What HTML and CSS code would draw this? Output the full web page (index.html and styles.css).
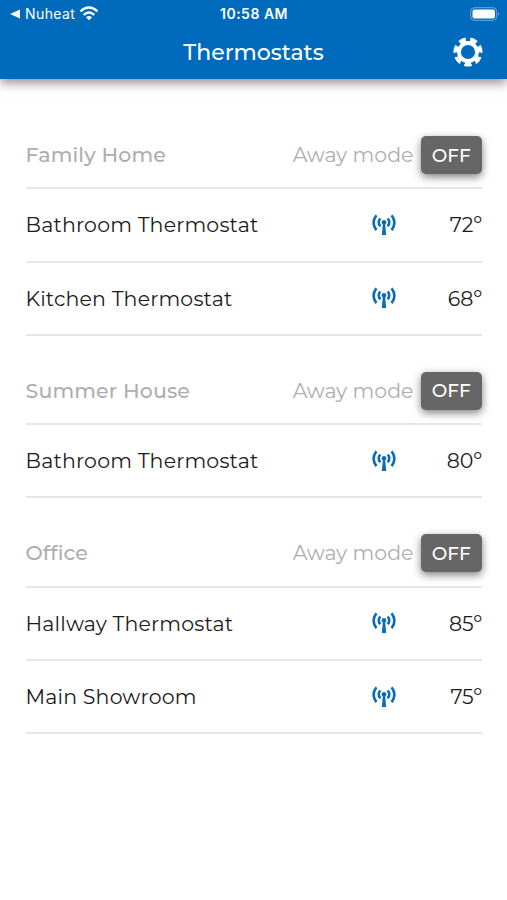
FILE: index.html
```html
<!DOCTYPE html>
<html lang="en">
<head>
    <meta charset="UTF-8">
    <meta name="viewport" content="width=device-width, initial-scale=1.0">
    <title>Thermostats</title>
    <link rel="stylesheet" href="styles.css">
</head>
<body>
    <svg width="0" height="0" class="sprite">
        <symbol id="signal" viewBox="0 0 26 22">
            <g fill="none" stroke="currentColor" stroke-width="2.6">
                <path d="M5.400 1.300Q-.2 8.700 5.400 16.100M20.600 1.300Q26.200 8.700 20.600 16.100"/>
                <path d="M9.300 4.500Q6.100 8.400 9.300 12.300M16.700 4.500Q19.900 8.400 16.700 12.300"/>
            </g>
            <circle cx="13" cy="8.200" r="2.300" fill="currentColor"/>
            <path d="M12 8h2l1.200 13h-4.400z" fill="currentColor"/>
        </symbol>
    </svg>
    <header class="header">
        <div class="status">
            <div class="status-left">
                <svg width="10" height="10" viewBox="0 0 10 10"><path d="M0 5l10-4.500v9z" fill="#fff"/></svg>
                <span class="carrier">Nuheat</span>
                <svg class="wifi" width="20" height="15" viewBox="0 0 20 15">
                    <g fill="none" stroke="#fff" stroke-width="2.300">
                        <path d="M1.500 5.300Q10-2.300 18.500 5.300"/>
                        <path d="M4.700 8.800Q10 4.200 15.300 8.800"/>
                    </g>
                    <path d="M7 11.300Q10 8.800 13 11.300L10 14.300z" fill="#fff"/>
                </svg>
            </div>
            <span class="time">10:58 AM</span>
            <svg class="battery" width="30" height="14" viewBox="0 0 30 14">
                <rect x=".7" y=".7" width="26" height="12.600" rx="3.800" fill="none" stroke="#6fa9dc" stroke-width="1"/>
                <rect x="2.500" y="2.500" width="22.500" height="9" rx="2" fill="#fff"/>
                <path d="M28.200 5q2 2 0 4z" fill="#6fa9dc"/>
            </svg>
        </div>
        <div class="navbar">
            <h1>Thermostats</h1>
            <svg class="gear" width="30" height="30" viewBox="-15 -15 30 30">
                <circle r="9" fill="none" stroke="#fff" stroke-width="3.800"/>
                <g fill="#fff">
                    <path id="tooth" d="M-2.800-9.500l-.2-2-1.300-2.200Q0-15.500 4.300-13.700L3-11.500l-.2 2z"/>
                    <use href="#tooth" transform="rotate(51.430)"/>
                    <use href="#tooth" transform="rotate(102.860)"/>
                    <use href="#tooth" transform="rotate(154.290)"/>
                    <use href="#tooth" transform="rotate(205.710)"/>
                    <use href="#tooth" transform="rotate(257.140)"/>
                    <use href="#tooth" transform="rotate(308.570)"/>
                </g>
            </svg>
        </div>
    </header>
    <main>
        <section>
            <div class="group">
                <h2>Family Home</h2>
                <span class="away">Away mode</span>
                <button class="toggle">OFF</button>
            </div>
            <div class="row">
                <span class="name">Bathroom Thermostat</span>
                <svg class="signal"><use href="#signal"/></svg>
                <span class="temp">72º</span>
            </div>
            <div class="row">
                <span class="name">Kitchen Thermostat</span>
                <svg class="signal"><use href="#signal"/></svg>
                <span class="temp">68º</span>
            </div>
        </section>
        <section>
            <div class="group">
                <h2>Summer House</h2>
                <span class="away">Away mode</span>
                <button class="toggle">OFF</button>
            </div>
            <div class="row">
                <span class="name">Bathroom Thermostat</span>
                <svg class="signal"><use href="#signal"/></svg>
                <span class="temp">80º</span>
            </div>
        </section>
        <section>
            <div class="group">
                <h2>Office</h2>
                <span class="away">Away mode</span>
                <button class="toggle">OFF</button>
            </div>
            <div class="row">
                <span class="name">Hallway Thermostat</span>
                <svg class="signal"><use href="#signal"/></svg>
                <span class="temp">85º</span>
            </div>
            <div class="row">
                <span class="name">Main Showroom</span>
                <svg class="signal"><use href="#signal"/></svg>
                <span class="temp">75º</span>
            </div>
        </section>
    </main>
</body>
</html>
```
FILE: styles.css
```css
* {
    box-sizing: border-box;
}
body {
    margin: 0;
    min-height: 100vh;
    overflow: hidden;
    background: #fff;
    color: #1c1c1c;
    font-family: Montserrat, Inter, sans-serif;
}
.sprite {
    display: block;
}
.header {
    height: 79px;
    background: #006bbd;
    color: #fff;
    box-shadow: 0 4px 10px rgba(50, 30, 30, 0.5);
}
.status {
    display: grid;
    grid-template-columns: 1fr auto 1fr;
    align-items: center;
    height: 27px;
    padding: 0 7px 0 10px;
    font-family: Inter, sans-serif;
    font-size: 14px;
}
.status-left {
    display: flex;
    align-items: center;
}
.carrier {
    margin: 0 4px 0 5px;
    letter-spacing: 0.4px;
}
.time {
    margin-right: 2px;
    font-weight: 600;
    letter-spacing: 0.500px;
}
.battery {
    justify-self: end;
}
.navbar {
    display: grid;
    grid-template-columns: 1fr auto 1fr;
    align-items: center;
    height: 50px;
    padding: 0 24px;
}
.navbar h1 {
    grid-column: 2;
    margin: 0;
    font-size: 22px;
    font-weight: 500;
}
.gear {
    justify-self: end;
    transform: rotate(180deg);
}
main {
    padding: 21px 25px 0 25.500px;
}
.group {
    display: flex;
    align-items: flex-start;
    height: 89.400px;
    padding-top: 36px;
    border-bottom: 2px solid #e6e6e6;
    line-height: 38px;
    color: #aeaeae;
}
.group h2 {
    flex: 1;
    margin: 0;
    font-size: 20.500px;
    font-weight: 500;
    letter-spacing: 0.150px;
}
.away {
    font-size: 20.500px;
}
.toggle {
    width: 61.500px;
    height: 38px;
    margin-left: 7px;
    padding: 0;
    border: 0;
    border-radius: 5px;
    background: #666;
    color: #fff;
    font-family: inherit;
    font-size: 18.500px;
    font-weight: 500;
    box-shadow: 0 3px 9px rgba(0, 0, 0, 0.5);
}
.row {
    display: flex;
    align-items: center;
    height: 73.200px;
    border-bottom: 2px solid #e6e6e6;
    font-size: 20.500px;
}
.name {
    flex: 1;
    letter-spacing: 0.180px;
}
.signal {
    width: 26px;
    height: 22px;
    color: #0b6cb8;
}
.temp {
    width: 85px;
    text-align: right;
}
```
